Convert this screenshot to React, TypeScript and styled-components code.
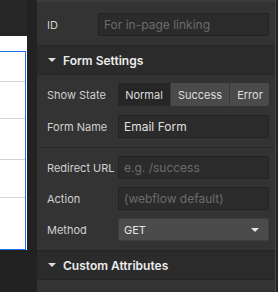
import React from "react";
import styled, { createGlobalStyle } from "styled-components";

const GlobalStyle = createGlobalStyle`
  html, body {
    margin: 0;
    padding: 0;
    background: #222222;
    font-family: Inter, "Liberation Sans", sans-serif;
    -webkit-font-smoothing: antialiased;
  }
  * { box-sizing: border-box; }
`;

const Shell = styled.div`
  display: flex;
  width: 278px;
  height: 292px;
  overflow: hidden;
  background: #222222;
`;

const Canvas = styled.div`
  width: 27px;
  flex-shrink: 0;
  display: flex;
  flex-direction: column;
`;

const CanvasTop = styled.div`
  height: 36px;
  background: #262626;
`;

const Page = styled.div`
  height: 214px;
  background: #ffffff;
  padding-top: 15px;
`;

const FormBox = styled.div`
  border: 1px solid #1a73e8;
  border-left: none;
  margin-right: 1px;
  height: 199px;
  display: flex;
  flex-direction: column;
`;

const FormLine = styled.div<{ $h: number }>`
  height: ${({ $h }) => $h}px;
  flex-shrink: 0;
  border-bottom: 1px solid #d4d4d4;
  &:last-child { border-bottom: none; flex: 1; }
`;

const Gutter = styled.div`
  width: 10px;
  flex-shrink: 0;
  background: #222222;
`;

const Panel = styled.div`
  width: 239px;
  flex-shrink: 0;
  background: #333333;
  border-right: 1px solid #484848;
  display: flex;
  flex-direction: column;
`;

const Row = styled.div<{ $label?: number }>`
  display: grid;
  grid-template-columns: ${({ $label }) => $label ?? 71}px 1fr;
  align-items: center;
  height: 23px;
`;

const IdSection = styled.div`
  border-top: 2px solid #3b3b3b;
  padding: 11px 6px 9px 10px;
`;

const Label = styled.span`
  font-size: 11px;
  color: #d0d0d0;
  white-space: nowrap;
  overflow: hidden;
`;

const Input = styled.div<{ $placeholder?: boolean }>`
  height: 23px;
  background: #2b2b2b;
  border: 1px solid #222222;
  border-radius: 2px;
  display: flex;
  align-items: center;
  padding: 0 5px;
  font-size: 12px;
  color: ${({ $placeholder }) => ($placeholder ? "#6b6b6b" : "#e0e0e0")};
  white-space: nowrap;
  overflow: hidden;
`;

const Header = styled.div`
  height: 30px;
  flex-shrink: 0;
  background: #2b2b2b;
  border-top: 1px solid #242424;
  border-bottom: 1px solid #242424;
  display: flex;
  align-items: center;
  padding-left: 11px;
  gap: 7px;
  font-size: 12px;
  font-weight: 600;
  color: #ececec;
`;

const Caret = styled.span`
  width: 0;
  height: 0;
  border-left: 4px solid transparent;
  border-right: 4px solid transparent;
  border-top: 4px solid #dddddd;
`;

const Body = styled.div<{ $sep?: boolean }>`
  display: flex;
  flex-direction: column;
  gap: ${({ $sep }) => ($sep ? 8 : 9)}px;
  padding: 8px 6px 9px 10px;
  border-top: ${({ $sep }) => ($sep ? "1px solid #2a2a2a" : "none")};
`;

const Segmented = styled.div`
  display: flex;
  height: 23px;
  border-radius: 2px;
  overflow: hidden;
  background: #222222;
`;

const Segment = styled.div<{ $active?: boolean; $w: number }>`
  width: ${({ $w }) => $w}px;
  flex-shrink: 0;
  display: flex;
  align-items: center;
  justify-content: center;
  font-size: 11px;
  color: #dedede;
  background: ${({ $active }) => ($active ? "#262626" : "#4a4a4a")};
  border-left: 1px solid #3a3a3a;
  &:first-child { border-left: none; }
`;

const Select = styled.div`
  height: 23px;
  background: #4b4b4b;
  border: 1px solid #3e3e3e;
  border-radius: 2px;
  display: flex;
  align-items: center;
  justify-content: space-between;
  padding: 0 9px 0 5px;
  font-size: 11px;
  color: #e6e6e6;
`;

const SelectCaret = styled.span`
  width: 0;
  height: 0;
  border-left: 4px solid transparent;
  border-right: 4px solid transparent;
  border-top: 4px solid #e6e6e6;
`;

const Rest = styled.div`
  flex: 1;
  background: #333333;
`;

export default function App() {
  return (
    <>
      <GlobalStyle />
      <Shell>
        <Canvas>
          <CanvasTop />
          <Page>
            <FormBox>
              <FormLine $h={30} />
              <FormLine $h={37} />
              <FormLine $h={41} />
              <FormLine $h={38} />
              <FormLine $h={52} />
            </FormBox>
          </Page>
        </Canvas>
        <Gutter />
        <Panel>
          <IdSection>
            <Row $label={51}>
              <Label>ID</Label>
              <Input $placeholder>For in-page linking</Input>
            </Row>
          </IdSection>
          <Header>
            <Caret />
            Form Settings
          </Header>
          <Body>
            <Row>
              <Label>Show State</Label>
              <Segmented>
                <Segment $active $w={52}>Normal</Segment>
                <Segment $w={59}>Success</Segment>
                <Segment $w={41}>Error</Segment>
              </Segmented>
            </Row>
            <Row>
              <Label>Form Name</Label>
              <Input>Email Form</Input>
            </Row>
          </Body>
          <Body $sep>
            <Row>
              <Label>Redirect URL</Label>
              <Input $placeholder>e.g. /success</Input>
            </Row>
            <Row>
              <Label>Action</Label>
              <Input $placeholder>(webflow default)</Input>
            </Row>
            <Row>
              <Label>Method</Label>
              <Select>
                GET
                <SelectCaret />
              </Select>
            </Row>
          </Body>
          <Header>
            <Caret />
            Custom Attributes
          </Header>
          <Rest />
        </Panel>
      </Shell>
    </>
  );
}
